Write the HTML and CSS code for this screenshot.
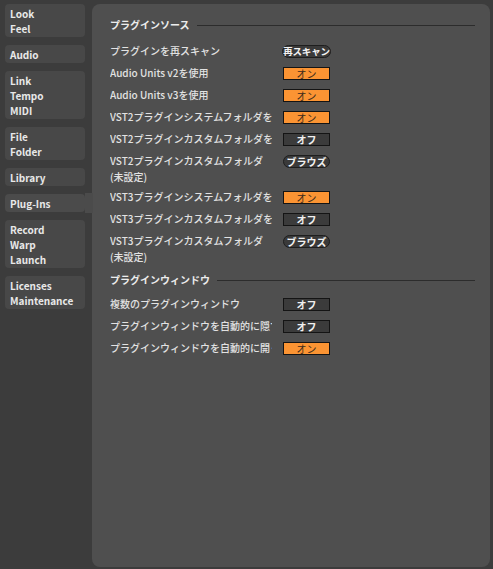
FILE: index.html
```html
<!DOCTYPE html>
<html lang="ja">
<head>
<meta charset="utf-8">
<title>Plug-Ins</title>
<link rel="stylesheet" href="styles.css">
</head>
<body>
<div class="app">
  <nav class="sidebar">
    <div class="tab">Look<br>Feel</div>
    <div class="tab">Audio</div>
    <div class="tab">Link<br>Tempo<br>MIDI</div>
    <div class="tab">File<br>Folder</div>
    <div class="tab">Library</div>
    <div class="tab selected">Plug-Ins</div>
    <div class="tab">Record<br>Warp<br>Launch</div>
    <div class="tab">Licenses<br>Maintenance</div>
  </nav>
  <main class="panel">
    <div class="heading"><span>プラグインソース</span><div class="rule"></div></div>
    <div class="row"><div class="label">プラグインを再スキャン</div><div class="pill wide">再スキャン</div></div>
    <div class="row"><div class="label">Audio Units v2を使用</div><div class="btn on">オン</div></div>
    <div class="row"><div class="label">Audio Units v3を使用</div><div class="btn on">オン</div></div>
    <div class="row"><div class="label">VST2プラグインシステムフォルダを使用</div><div class="btn on">オン</div></div>
    <div class="row"><div class="label">VST2プラグインカスタムフォルダを使用</div><div class="btn off">オフ</div></div>
    <div class="row multi"><div class="label">VST2プラグインカスタムフォルダ<br>(未設定)</div><div class="pill">ブラウズ</div></div>
    <div class="row"><div class="label">VST3プラグインシステムフォルダを使用</div><div class="btn on">オン</div></div>
    <div class="row"><div class="label">VST3プラグインカスタムフォルダを使用</div><div class="btn off">オフ</div></div>
    <div class="row multi"><div class="label">VST3プラグインカスタムフォルダ<br>(未設定)</div><div class="pill">ブラウズ</div></div>
    <div class="heading second"><span>プラグインウィンドウ</span><div class="rule"></div></div>
    <div class="row"><div class="label">複数のプラグインウィンドウ</div><div class="btn off">オフ</div></div>
    <div class="row"><div class="label">プラグインウィンドウを自動的に隠す</div><div class="btn off">オフ</div></div>
    <div class="row"><div class="label">プラグインウィンドウを自動的に開く</div><div class="btn on">オン</div></div>
  </main>
</div>
</body>
</html>
```
FILE: styles.css
```css
* { box-sizing: border-box; }
html, body { margin: 0; height: 100%; }
body {
  background: #3c3c3c;
  font-family: "Noto Sans CJK JP", "Noto Sans", sans-serif;
  font-size: 10px;
  color: #e4e4e4;
}
.app {
  display: flex;
  height: 569px;
  padding: 4px 3px 2px 5px;
  gap: 7px;
}
.sidebar {
  width: 80px;
  flex: none;
  display: flex;
  flex-direction: column;
  gap: 8px;
}
.tab {
  background: #484848;
  border-radius: 4px;
  padding: 2px 5px 1px;
  line-height: 15px;
  font-weight: 700;
  font-size: 10px;
  color: #e8e8e8;
  position: relative;
}
.tab.selected {
  background: #4b4b4b;
}
.tab.selected::after {
  content: "";
  position: absolute;
  left: 100%;
  top: -1px;
  bottom: -1px;
  width: 8px;
  background: #4b4b4b;
}
.panel {
  flex: 1;
  background: #4f4f4f;
  border-radius: 8px;
  padding: 13px 15px 0 18px;
}
.heading {
  display: flex;
  align-items: center;
  gap: 7px;
  font-weight: 700;
  line-height: 16px;
  color: #ececec;
  margin-bottom: 7px;
}
.heading.second { margin-top: 6px; margin-bottom: 5px; }
.rule {
  flex: 1;
  height: 1px;
  background: #2c2c2c;
}
.row {
  display: flex;
  align-items: flex-start;
  padding: 3px 0;
}
.row.multi { padding-bottom: 1px; }
.label {
  width: 162px;
  flex: none;
  white-space: nowrap;
  overflow: hidden;
  line-height: 16px;
  font-weight: 500;
  color: #e2e2e2;
  margin-right: 11px;
}
.btn {
  width: 47px;
  height: 13px;
  margin-top: 2px;
  border: 1px solid #141414;
  text-align: center;
  line-height: 11px;
  font-size: 10px;
}
.btn.on {
  background: #fb9433;
  color: #3a2a1a;
}
.btn.off {
  background: #3b3b3b;
  color: #f0f0f0;
  font-weight: 700;
}
.pill {
  width: 47px;
  height: 13px;
  margin-top: 2px;
  border: 1px solid #1e1e1e;
  border-radius: 7px;
  background: #3a3a3a;
  text-align: center;
  line-height: 11px;
  font-weight: 700;
  color: #f2f2f2;
  white-space: nowrap;
}
.pill.wide {
  width: 49px;
  margin-left: -1px;
  font-size: 9.5px;
  letter-spacing: -0.2px;
}
```
